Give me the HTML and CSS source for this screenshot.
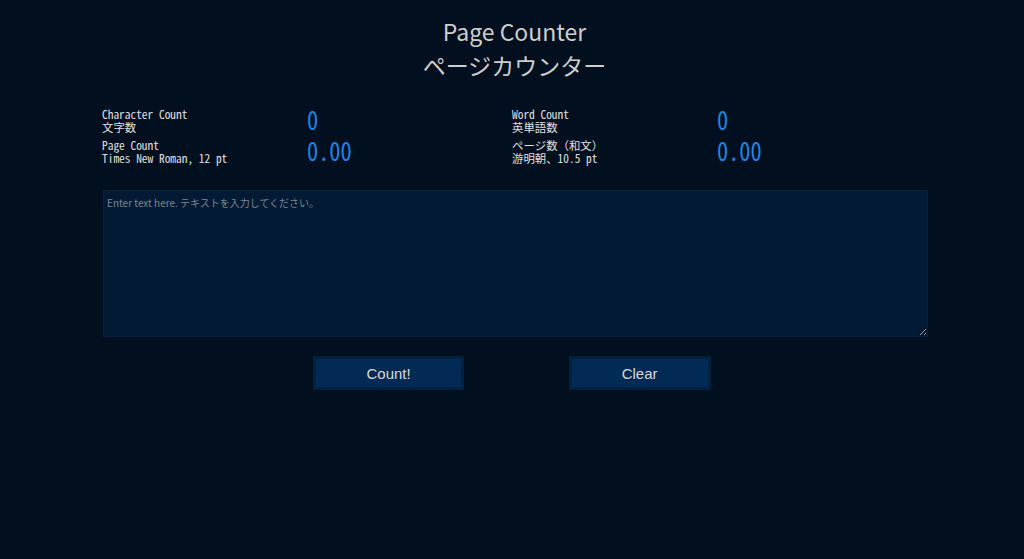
FILE: index.html
```html
<!DOCTYPE html>
<html lang="ja">
<head>
  <meta charset="UTF-8">
  <title>Page Counter</title>
  <meta name="viewport" content="width=device-width, initial-scale=1">
  <link rel="stylesheet" href="styles.css">
</head>
<body>
<h1>Page Counter<br>ページカウンター</h1>

<div class="stats">
  <div class="label">Character Count<br>文字数</div>
  <div class="value" id="chars">0</div>
  <div class="label">Word Count<br>英単語数</div>
  <div class="value" id="words">0</div>
  <div class="label">Page Count<br>Times New Roman, 12 pt</div>
  <div class="value" id="pagesEn">0.00</div>
  <div class="label">ページ数（和文）<br>游明朝、10.5 pt</div>
  <div class="value" id="pagesJa">0.00</div>
</div>

<textarea id="input" placeholder="Enter text here. テキストを入力してください。"></textarea>

<div class="buttons">
  <button id="count">Count!</button>
  <button id="clear">Clear</button>
</div>

<script>
const input = document.getElementById('input');
document.getElementById('count').onclick = function(){
  const t = input.value;
  const chars = t.replace(/\s/g,'').length;
  const words = (t.match(/[A-Za-z0-9'’-]+/g) || []).length;
  document.getElementById('chars').textContent = chars;
  document.getElementById('words').textContent = words;
  document.getElementById('pagesEn').textContent = (words / 500).toFixed(2);
  document.getElementById('pagesJa').textContent = (chars / 1600).toFixed(2);
};
document.getElementById('clear').onclick = function(){
  input.value = '';
  ['chars','words'].forEach(id => document.getElementById(id).textContent = '0');
  ['pagesEn','pagesJa'].forEach(id => document.getElementById(id).textContent = '0.00');
};
</script>
</body>
</html>
```

FILE: styles.css
```css
*{box-sizing:border-box;}
body{background:#010f1e;color:#cfcfcf;margin:0;padding:14px 97px 0 102px;font-family:"Noto Sans CJK JP",sans-serif;}
h1{font-weight:400;font-size:23px;line-height:34px;text-align:center;margin:0 0 26px;color:#cdcdcd;}
.stats{display:grid;grid-template-columns:205px 205px 205px 205px;row-gap:5px;align-items:center;}
.label{font-family:"Noto Sans Mono CJK JP","Liberation Mono",monospace;font-size:11.4px;line-height:13px;color:#e0e0e0;}
.value{font-family:"Noto Sans Mono CJK JP","Liberation Mono",monospace;font-size:26px;line-height:26px;margin-top:-4px;color:#1f84e8;transform:scaleX(.86);transform-origin:left center;}
textarea{display:block;width:825px;height:147px;margin:25px 0 19px 1px;background:#021a33;border:1px solid #03213f;color:#cfcfcf;padding:4px 3px;font-family:"Noto Sans CJK JP",sans-serif;font-size:10px;resize:vertical;}
textarea::placeholder{color:#7d8690;}
.buttons{display:flex;justify-content:center;gap:105px;margin-left:-5px;}
button{height:34px;padding:0 50px;background:#032a55;border:3px solid #02203f;color:#d8d8d8;font-family:"Liberation Sans",sans-serif;font-size:15px;cursor:pointer;}
```
